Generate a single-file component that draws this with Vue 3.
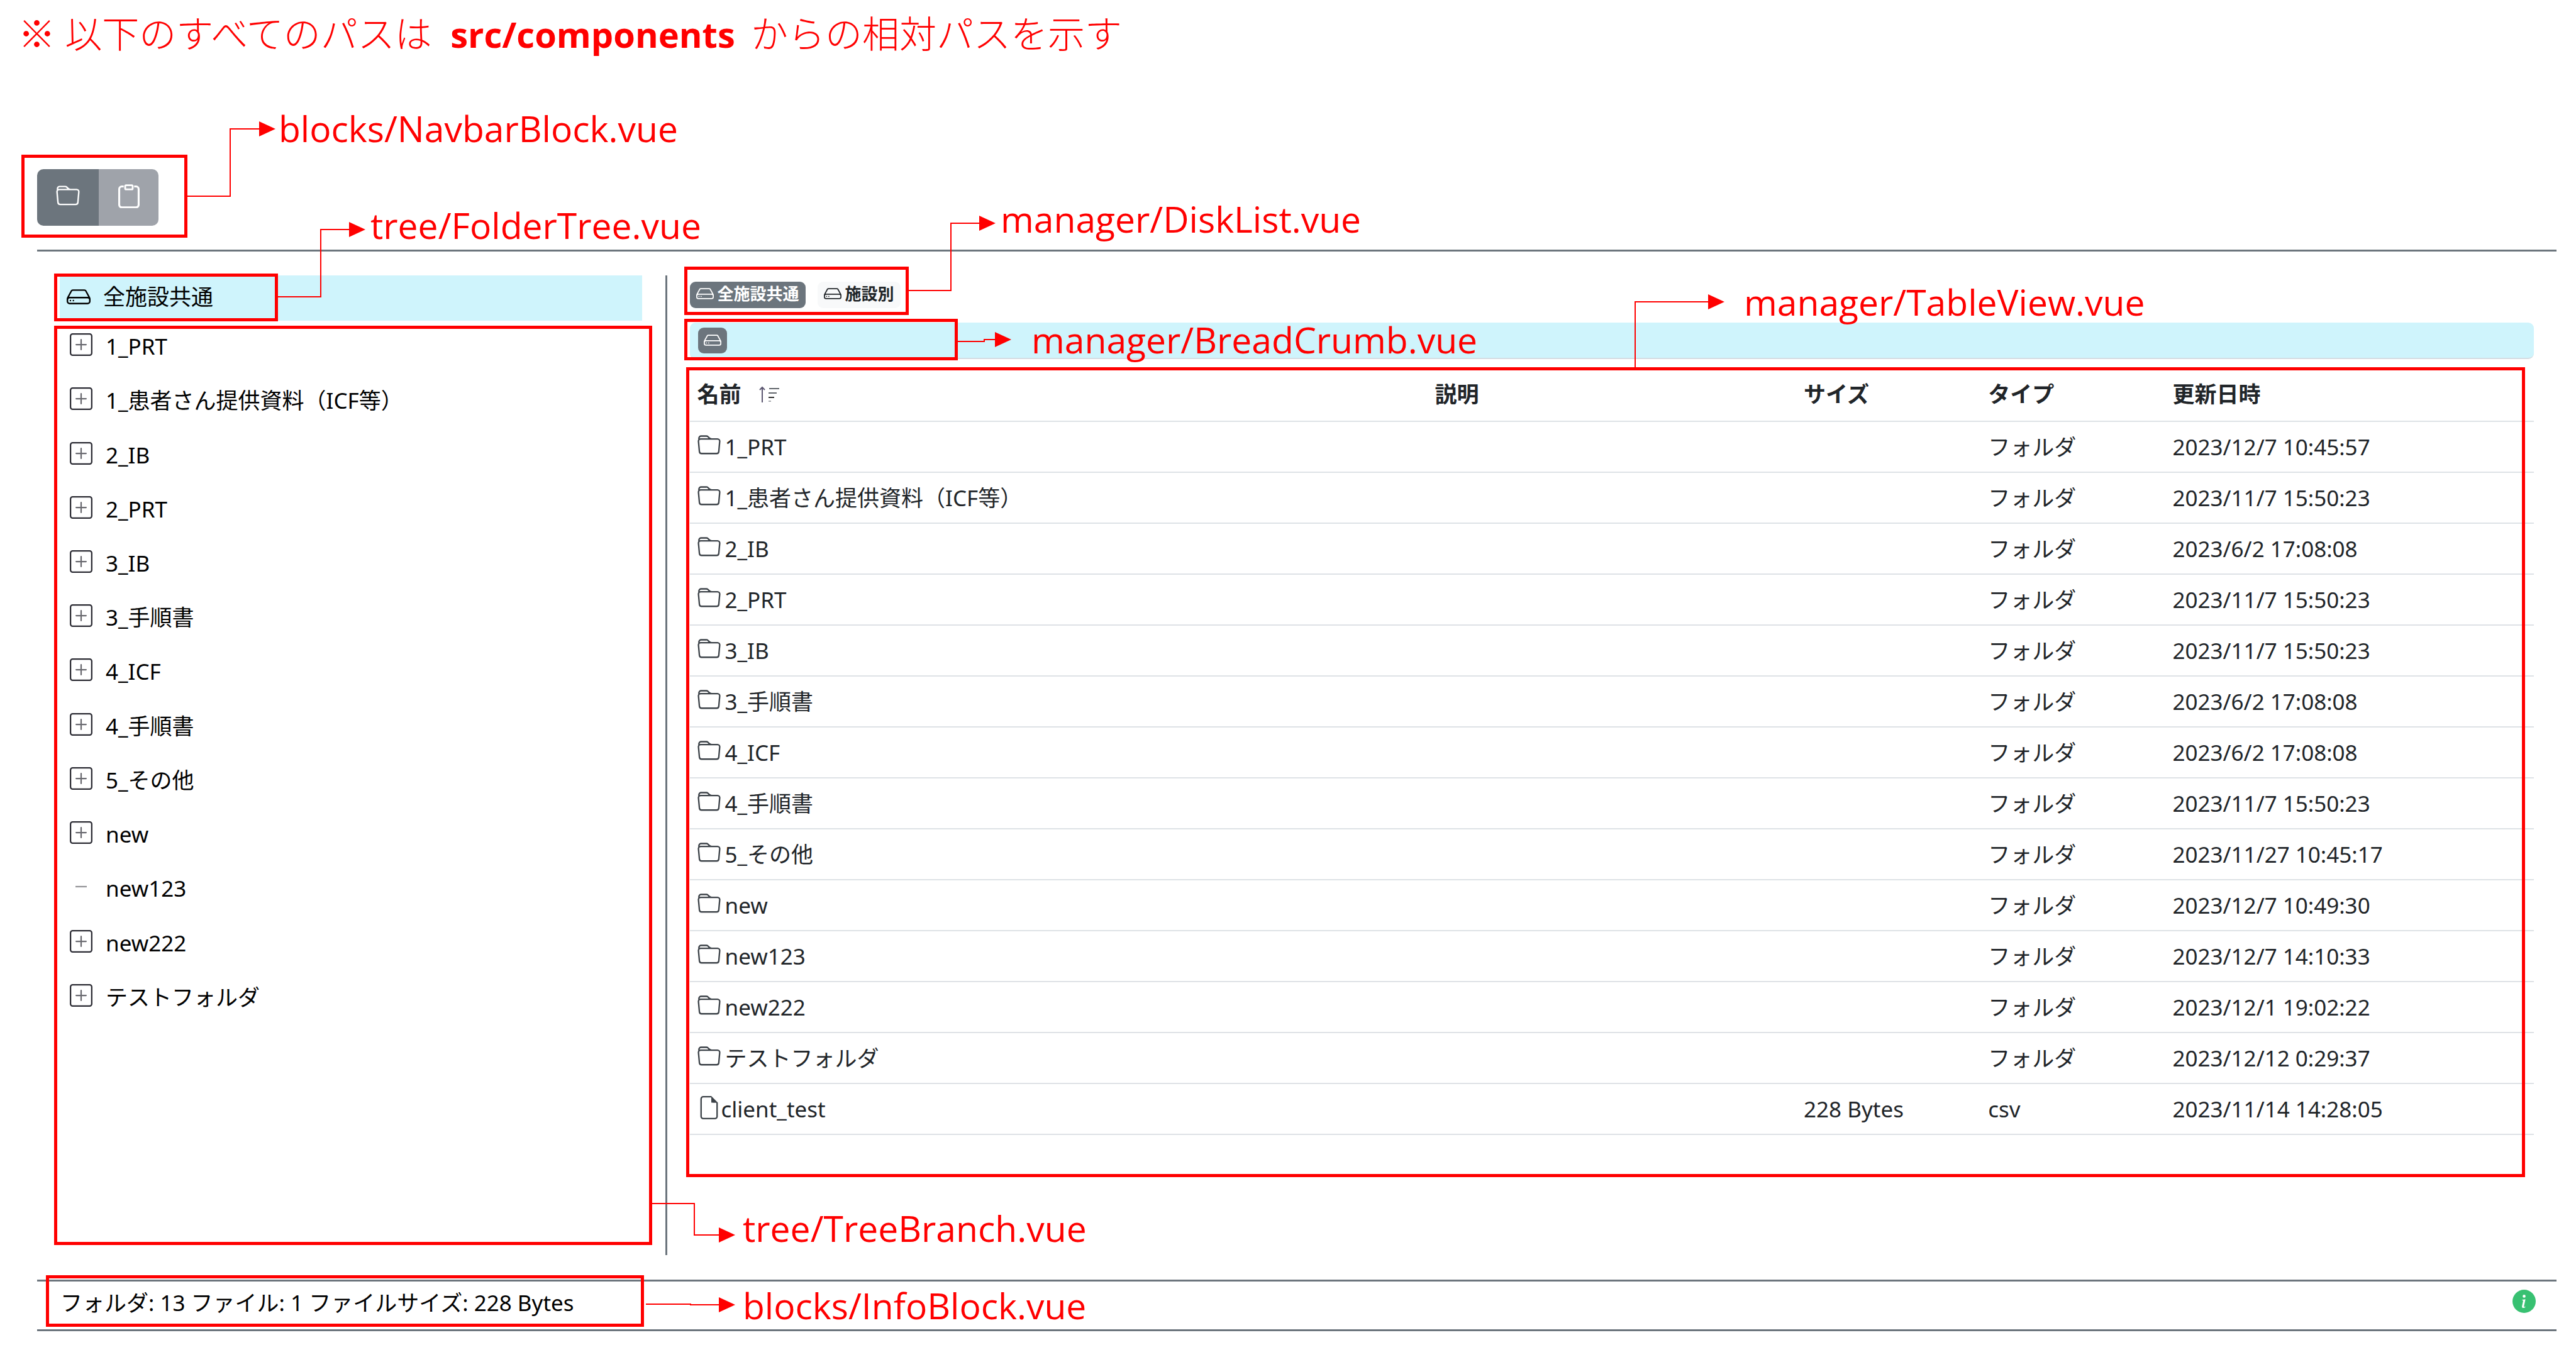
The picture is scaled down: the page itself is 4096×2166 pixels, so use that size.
<script setup>
const treeItems = [
  { name: '1_PRT', open: true },
  { name: '1_患者さん提供資料（ICF等）', open: true },
  { name: '2_IB', open: true },
  { name: '2_PRT', open: true },
  { name: '3_IB', open: true },
  { name: '3_手順書', open: true },
  { name: '4_ICF', open: true },
  { name: '4_手順書', open: true },
  { name: '5_その他', open: true },
  { name: 'new', open: true },
  { name: 'new123', open: false },
  { name: 'new222', open: true },
  { name: 'テストフォルダ', open: true },
]

const rows = [
  { name: '1_PRT', size: '', type: 'フォルダ', date: '2023/12/7 10:45:57' },
  { name: '1_患者さん提供資料（ICF等）', size: '', type: 'フォルダ', date: '2023/11/7 15:50:23' },
  { name: '2_IB', size: '', type: 'フォルダ', date: '2023/6/2 17:08:08' },
  { name: '2_PRT', size: '', type: 'フォルダ', date: '2023/11/7 15:50:23' },
  { name: '3_IB', size: '', type: 'フォルダ', date: '2023/11/7 15:50:23' },
  { name: '3_手順書', size: '', type: 'フォルダ', date: '2023/6/2 17:08:08' },
  { name: '4_ICF', size: '', type: 'フォルダ', date: '2023/6/2 17:08:08' },
  { name: '4_手順書', size: '', type: 'フォルダ', date: '2023/11/7 15:50:23' },
  { name: '5_その他', size: '', type: 'フォルダ', date: '2023/11/27 10:45:17' },
  { name: 'new', size: '', type: 'フォルダ', date: '2023/12/7 10:49:30' },
  { name: 'new123', size: '', type: 'フォルダ', date: '2023/12/7 14:10:33' },
  { name: 'new222', size: '', type: 'フォルダ', date: '2023/12/1 19:02:22' },
  { name: 'テストフォルダ', size: '', type: 'フォルダ', date: '2023/12/12 0:29:37' },
  { name: 'client_test', size: '228 Bytes', type: 'csv', date: '2023/11/14 14:28:05', file: true },
]

// Each callout: connector polyline, arrow tip, and the label's left edge and baseline.
const callouts = [
  { text: 'blocks/NavbarBlock.vue', line: '298,312 366,312 366,205 414,205', tip: [438, 205], at: [443, 226] },
  { text: 'tree/FolderTree.vue', line: '442,472 510,472 510,365 558,365', tip: [581, 365], at: [589, 380] },
  { text: 'manager/DiskList.vue', line: '1444,462 1512,462 1512,355 1559,355', tip: [1583, 355], at: [1591, 370] },
  { text: 'manager/BreadCrumb.vue', line: '1522,543 1565,543 1565,540 1585,540', tip: [1608, 540], at: [1640, 562] },
  { text: 'manager/TableView.vue', line: '2600,584 2600,480 2719,480', tip: [2742, 480], at: [2773, 502] },
  { text: 'tree/TreeBranch.vue', line: '1037,1914 1104,1914 1104,1964 1146,1964', tip: [1169, 1964], at: [1181, 1975] },
  { text: 'blocks/InfoBlock.vue', line: '1027,2074 1098,2074 1098,2075 1146,2075', tip: [1169, 2075], at: [1181, 2098] },
]

const head = ([x, y]) => `${x - 26},${y - 12} ${x},${y} ${x - 26},${y + 12}`
</script>

<template>
  <div class="page">
    <svg class="defs" aria-hidden="true">
      <symbol id="i-folder" viewBox="0 0 16 16">
        <path d="M.54 3.87.5 3a2 2 0 0 1 2-2h3.672a2 2 0 0 1 1.414.586l.828.828A2 2 0 0 0 9.828 3h3.982a2 2 0 0 1 1.992 2.181l-.637 7A2 2 0 0 1 13.174 14H2.826a2 2 0 0 1-1.991-1.819l-.637-7a2 2 0 0 1 .342-1.31zM2.19 4a1 1 0 0 0-.996 1.09l.637 7a1 1 0 0 0 .995.91h10.348a1 1 0 0 0 .995-.91l.637-7A1 1 0 0 0 13.81 4zm4.69-1.707A1 1 0 0 0 6.172 2H2.5a1 1 0 0 0-1 .981l.006.139q.323-.119.684-.12h5.396z" />
      </symbol>
      <symbol id="i-hdd" viewBox="0 0 16 16">
        <path d="M4.5 11a.5.5 0 1 0 0-1 .5.5 0 0 0 0 1M3 10.5a.5.5 0 1 1-1 0 .5.5 0 0 1 1 0" />
        <path d="M16 11a2 2 0 0 1-2 2H2a2 2 0 0 1-2-2V9.51c0-.418.105-.83.305-1.197l2.472-4.531A1.5 1.5 0 0 1 4.094 3h7.812a1.5 1.5 0 0 1 1.317.782l2.472 4.53c.2.368.305.78.305 1.198zM3.655 4.26 1.592 8.043Q1.79 8 2 8h12q.21 0 .408.042L12.345 4.26a.5.5 0 0 0-.439-.26H4.094a.5.5 0 0 0-.44.26zM1 10v1a1 1 0 0 0 1 1h12a1 1 0 0 0 1-1v-1a1 1 0 0 0-1-1H2a1 1 0 0 0-1 1" />
      </symbol>
      <symbol id="i-file" viewBox="0 0 16 16">
        <path d="M14 4.5V14a2 2 0 0 1-2 2H4a2 2 0 0 1-2-2V2a2 2 0 0 1 2-2h5.5zm-3 0A1.500 1.500 0 0 1 9.500 3V1H4a1 1 0 0 0-1 1v12a1 1 0 0 0 1 1h8a1 1 0 0 0 1-1V4.500z" />
        <path d="M9.500 .5V4.500H13.500z" />
      </symbol>
      <symbol id="i-clipboard" viewBox="0 0 16 16">
        <path d="M4.500 1.500H3.200A1.700 1.700 0 0 0 1.500 3.200v10.600a1.700 1.700 0 0 0 1.700 1.700h9.600a1.700 1.700 0 0 0 1.700-1.700V3.200a1.700 1.700 0 0 0-1.700-1.700h-1.300" fill="none" stroke="currentColor" stroke-width="1.300" />
        <rect x="5.500" y=".7" width="5" height="2.700" rx=".6" fill="none" stroke="currentColor" stroke-width="1.200" />
      </symbol>
      <symbol id="i-plus" viewBox="0 0 16 16">
        <path d="M14 1a1 1 0 0 1 1 1v12a1 1 0 0 1-1 1H2a1 1 0 0 1-1-1V2a1 1 0 0 1 1-1zM2 0a2 2 0 0 0-2 2v12a2 2 0 0 0 2 2h12a2 2 0 0 0 2-2V2a2 2 0 0 0-2-2z" />
        <path class="thin" d="M8 4a.5.5 0 0 1 .5.5v3h3a.5.5 0 0 1 0 1h-3v3a.5.5 0 0 1-1 0v-3h-3a.5.5 0 0 1 0-1h3v-3A.5.5 0 0 1 8 4" />
      </symbol>
      <symbol id="i-dash" viewBox="0 0 16 16">
        <path d="M4 7.500h8v1H4z" />
      </symbol>
    </svg>

    <h1 class="note">※ 以下のすべてのパスは <strong>src/components</strong> からの相対パスを示す</h1>

    <nav class="navbar">
      <div class="btn-group">
        <button type="button" class="btn" aria-label="フォルダ"><svg class="icon"><use href="#i-folder" /></svg></button>
        <button type="button" class="btn muted" aria-label="クリップボード"><svg class="icon"><use href="#i-clipboard" /></svg></button>
      </div>
      <span class="frame frame-nav"></span>
    </nav>

    <main class="body">
      <aside class="tree">
        <div class="tree-head">
          <svg class="icon"><use href="#i-hdd" /></svg>
          <span>全施設共通</span>
          <span class="frame frame-disk"></span>
        </div>
        <div class="branch">
          <ul class="branch-list">
            <li v-for="item in treeItems" :key="item.name">
              <svg class="toggle" :class="{ faint: !item.open }"><use :href="item.open ? '#i-plus' : '#i-dash'" /></svg>
              <span>{{ item.name }}</span>
            </li>
          </ul>
          <span class="frame frame-branch"></span>
        </div>
      </aside>

      <section class="manager">
        <div class="disks">
          <button type="button" class="badge active"><svg class="icon-sm"><use href="#i-hdd" /></svg>全施設共通</button>
          <button type="button" class="badge"><svg class="icon-sm"><use href="#i-hdd" /></svg>施設別</button>
          <span class="frame frame-disks"></span>
        </div>

        <div class="crumbs">
          <button type="button" class="crumb" aria-label="ルート"><svg class="icon-sm"><use href="#i-hdd" /></svg></button>
          <span class="frame frame-crumbs"></span>
        </div>

        <div class="table-view">
          <table>
            <colgroup>
              <col class="w40" /><col class="w20" /><col class="w10" /><col class="w10" /><col class="w20" />
            </colgroup>
            <thead>
              <tr>
                <th scope="col">
                  <span class="sortable">名前
                    <svg class="sort" viewBox="0 0 32 26">
                      <path d="M5 26V2M1 6l4-4 4 4" fill="none" stroke="#5b5670" stroke-width="2" />
                      <path d="M16 4h16M15 11h13" stroke="#62666c" stroke-width="2" />
                      <path d="M15 18h9" stroke="#333" stroke-width="2" />
                      <path d="M15 24h4" stroke="#a8abb0" stroke-width="2" />
                    </svg>
                  </span>
                </th>
                <th scope="col">説明</th>
                <th scope="col">サイズ</th>
                <th scope="col">タイプ</th>
                <th scope="col">更新日時</th>
              </tr>
            </thead>
            <tbody>
              <tr v-for="row in rows" :key="row.name">
                <td>
                  <span class="name">
                    <svg class="entry" :class="{ file: row.file }"><use :href="row.file ? '#i-file' : '#i-folder'" /></svg>
                    <span>{{ row.name }}</span>
                  </span>
                </td>
                <td></td>
                <td>{{ row.size }}</td>
                <td>{{ row.type }}</td>
                <td>{{ row.date }}</td>
              </tr>
            </tbody>
          </table>
          <span class="frame frame-table"></span>
        </div>
      </section>
    </main>

    <footer class="info">
      <span>フォルダ: 13 ファイル: 1 ファイルサイズ: 228 Bytes</span>
      <svg class="about" viewBox="0 0 16 16" role="img" aria-label="情報">
        <path fill="#38c172" d="M8 16A8 8 0 1 0 8 0a8 8 0 0 0 0 16" />
        <path fill="#fff" d="m8.930 6.588-2.290.287-.082.380.450.083c.294.070.352.176.288.469l-.738 3.468c-.194.897.105 1.319.808 1.319.545 0 1.178-.252 1.465-.598l.088-.416c-.200.176-.492.246-.686.246-.275 0-.375-.193-.304-.533zM9 4.500a1 1 0 1 1-2 0 1 1 0 0 1 2 0" />
      </svg>
      <span class="frame frame-info"></span>
    </footer>

    <svg class="callouts">
      <g v-for="c in callouts" :key="c.text">
        <polyline :points="c.line" />
        <polygon :points="head(c.tip)" />
        <text :x="c.at[0]" :y="c.at[1]">{{ c.text }}</text>
      </g>
    </svg>
  </div>
</template>

<style>
html,
body {
  background: #fff;
}
</style>

<style scoped>
.page {
  position: relative;
  box-sizing: border-box;
  min-height: 100vh;
  padding: 0 31px 0 59px;
  overflow: hidden;
  font: 400 35px/48px "Noto Sans", "Noto Sans CJK JP", sans-serif;
  color: #000;
}
.defs {
  position: absolute;
  width: 0;
  height: 0;
}
svg {
  display: block;
  flex: none;
  fill: currentColor;
}
.icon {
  width: 38px;
  height: 38px;
}
.icon-sm {
  width: 28px;
  height: 28px;
}
.note {
  height: 261px;
  margin: 0 0 0 -30px;
  padding-top: 8px;
  font: 300 59px/90px "Open Sans", "Noto Sans CJK JP", sans-serif;
  color: #f00;
  white-space: nowrap;
}
.note strong {
  margin: 0 10px 0 14px;
  font-size: 56px;
  font-weight: 700;
}
.frame {
  position: absolute;
  border: 5px solid #f00;
  pointer-events: none;
}

.navbar {
  position: relative;
  padding-bottom: 38px;
  border-bottom: 3px solid #6c757d;
}
.btn-group {
  display: flex;
}
.btn {
  display: flex;
  align-items: center;
  justify-content: center;
  width: 98px;
  height: 90px;
  padding: 0 0 4px;
  border: 0;
  border-radius: 10px 0 0 10px;
  background: #6c757d;
  color: #fff;
}
.btn.muted {
  width: 95px;
  border-radius: 0 10px 10px 0;
  background: #9fa3aa;
}
.frame-nav {
  left: -25px;
  top: -23px;
  width: 254px;
  height: 122px;
}

.body {
  display: grid;
  grid-template-columns: 1fr 3fr;
  margin-top: 38px;
}
.tree {
  box-sizing: border-box;
  height: 1558px;
  padding: 0 37px 0 36px;
  border-right: 3px solid #6c757d;
}
.tree-head {
  position: relative;
  display: flex;
  align-items: center;
  box-sizing: border-box;
  gap: 20px;
  height: 72px;
  padding: 0 0 4px 11px;
  background: #cff4fc;
}
.frame-disk {
  left: -9px;
  top: -3px;
  width: 346px;
  height: 66px;
}
.branch {
  position: relative;
  display: flow-root;
  height: 1470px;
}
.branch-list {
  display: grid;
  grid-auto-rows: 1fr;
  height: 1121px;
  margin: -5px 0 0;
  padding: 0 0 0 16px;
  list-style: none;
}
.branch-list li {
  display: flex;
  align-items: center;
  gap: 21px;
}
.branch-list li span {
  padding-top: 6px;
  white-space: nowrap;
}
.toggle {
  width: 36px;
  height: 36px;
  color: #2b2b33;
}
.thin {
  opacity: 0.7;
}
.toggle.faint {
  opacity: 0.5;
}
.frame-branch {
  left: -9px;
  top: 8px;
  right: -16px;
  bottom: 0;
}

.manager {
  padding: 0 36px;
  color: #212529;
}
.disks {
  position: relative;
  display: flex;
  gap: 19px;
  padding: 10px 0 23px;
}
.badge {
  display: flex;
  align-items: center;
  gap: 6px;
  height: 42px;
  padding: 0 10px 4px;
  border: 0;
  border-radius: 9px;
  background: #f8f9fa;
  color: #212529;
  font: 700 26px/38px "Noto Sans", "Noto Sans CJK JP", sans-serif;
}
.badge.active {
  background: #6c757d;
  color: #fff;
}
.frame-disks {
  left: -9px;
  top: -14px;
  width: 347px;
  height: 67px;
}
.crumbs {
  position: relative;
  display: flex;
  align-items: center;
  height: 56px;
  padding-left: 13px;
  border-bottom: 2px solid #d3dce2;
  border-radius: 9px;
  background: #cff4fc;
}
.crumb {
  display: flex;
  align-items: center;
  justify-content: center;
  width: 46px;
  height: 41px;
  padding: 0;
  border: 0;
  border-radius: 9px;
  background: #6c757d;
  color: #fff;
}
.frame-crumbs {
  left: -9px;
  top: -6px;
  width: 425px;
  height: 56px;
}
.table-view {
  position: relative;
  box-sizing: border-box;
  height: 1301px;
  padding-top: 13px;
}
.frame-table {
  left: -6px;
  top: 13px;
  right: 14px;
  bottom: 0;
}
table {
  width: 100%;
  table-layout: fixed;
  border-collapse: separate;
  border-spacing: 0;
}
.w40 {
  width: 40%;
}
.w20 {
  width: 20%;
}
.w10 {
  width: 10%;
}
th,
td {
  box-sizing: border-box;
  height: 81px;
  padding: 0 12px;
  border-bottom: 2px solid #dee2e6;
  text-align: left;
  white-space: nowrap;
}
th {
  height: 87px;
  font-weight: 700;
}
.sortable {
  display: flex;
  align-items: center;
  gap: 28px;
}
.sort {
  width: 32px;
  height: 26px;
}
.name {
  display: flex;
  align-items: center;
  gap: 7px;
}
.entry {
  width: 37px;
  height: 37px;
  margin-top: -4px;
  color: #3c4248;
}
.entry.file {
  margin-right: -6px;
}

.info {
  position: relative;
  display: flex;
  align-items: center;
  justify-content: space-between;
  box-sizing: border-box;
  height: 82px;
  margin-top: 39px;
  padding: 0 33px 8px 37px;
  border-top: 3px solid #6c757d;
  border-bottom: 3px solid #6c757d;
}
.about {
  width: 37px;
  height: 37px;
  margin-top: -6px;
}
.frame-info {
  left: 14px;
  top: -10px;
  width: 941px;
  height: 72px;
}

.callouts {
  position: absolute;
  left: 0;
  top: 0;
  width: 100%;
  height: 100%;
  fill: #f00;
  font: 400 57px "Open Sans", "Noto Sans", sans-serif;
  pointer-events: none;
}
.callouts polyline {
  fill: none;
  stroke: #f00;
  stroke-width: 2px;
}
</style>
